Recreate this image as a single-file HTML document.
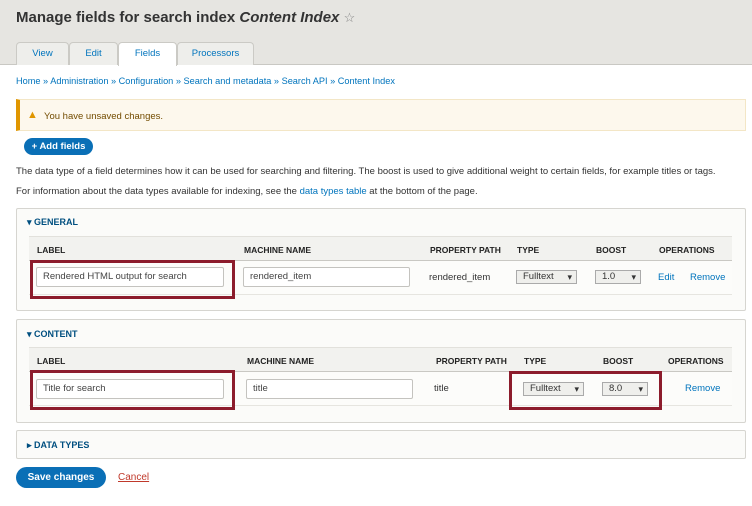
<!DOCTYPE html>
<html><head><meta charset="utf-8"><style>
*{box-sizing:border-box;margin:0;padding:0}
body{width:752px;height:506px;background:#fff;font-family:"Liberation Sans",Arial,sans-serif;color:#333;position:relative;overflow:hidden;font-size:9px}
.a{position:absolute;white-space:nowrap}
a,.lnk{color:#0074bd;text-decoration:none}
.hdr{position:absolute;left:0;top:0;width:752px;height:65px;background:#e6e5e1;border-bottom:1px solid #c9c8c3}
.tab{position:absolute;top:42px;height:23px;background:#eeeeeb;border:1px solid #cbcac5;border-bottom:none;border-radius:4px 4px 0 0;color:#0074bd;font-size:9.5px;text-align:center;line-height:22px}
.fs{position:absolute;left:16px;width:730px;background:#fbfbf9;border:1px solid #d6d5d0;border-radius:2px}
.th{position:absolute;left:12px;width:703px;height:25px;background:#f2f2ef;border-top:1px solid #e2e1dc;border-bottom:1px solid #c9c8c3}
.th span{position:absolute;top:8px;font-size:8.5px;font-weight:bold;color:#222}
.row{position:absolute;left:12px;width:703px;border-bottom:1px solid #e6e5e0;background:#fcfcfa}
.in{position:absolute;height:20px;background:#fff;border:1px solid #c4c3bf;border-radius:2px;font-size:9.5px;padding-left:6px;line-height:18px;color:#444}
.sel{position:absolute;height:14px;background:#efefec;border:1px solid #aaa;font-size:9.5px;line-height:12px;padding-left:6px;color:#333}
.sel:after{content:"▾";position:absolute;right:4px;top:0;font-size:9px}
.red{position:absolute;border:3px solid #8c1c2c}
.leg{position:absolute;left:10px;font-size:9px;font-weight:bold;color:#004f80}
.btn{position:absolute;background:#0a6fb6;color:#fff;font-weight:bold;border-radius:12px;text-align:center}
</style></head><body>
<div class="hdr"></div>
<div class="a" style="left:16px;top:9px;font-size:15px;font-weight:bold;color:#333">Manage fields for search index <i>Content Index</i> <span style="font-weight:normal;font-size:13px;color:#888">☆</span></div>
<div class="tab" style="left:16px;width:53px">View</div>
<div class="tab" style="left:69px;width:49px">Edit</div>
<div class="tab" style="left:118px;width:59px;background:#fff;height:24px">Fields</div>
<div class="tab" style="left:177px;width:77px">Processors</div>
<div class="a lnk" style="left:16px;top:76px;font-size:9.2px">Home » Administration » Configuration » Search and metadata » Search API » Content Index</div>
<div class="a" style="left:16px;top:99px;width:730px;height:32px;background:#fdf8ed;border:1px solid #f3e6c6;border-left:4px solid #e09600"></div>
<div class="a" style="left:27px;top:109px;font-size:11px;color:#e09600">▲</div>
<div class="a" style="left:44px;top:111px;font-size:9.5px;color:#734c00">You have unsaved changes.</div>
<div class="btn" style="left:24px;top:138px;width:69px;height:17px;line-height:17px;font-size:9.5px">+ Add fields</div>
<div class="a" style="left:16px;top:166px;font-size:9.5px">The data type of a field determines how it can be used for searching and filtering. The boost is used to give additional weight to certain fields, for example titles or tags.</div>
<div class="a" style="left:16px;top:186px;font-size:9.5px">For information about the data types available for indexing, see the <span class="lnk">data types table</span> at the bottom of the page.</div>

<div class="fs" style="top:208px;height:103px">
<div class="leg" style="top:8px">▾ GENERAL</div>
<div class="th" style="top:27px"><span style="left:8px">LABEL</span><span style="left:215px">MACHINE NAME</span><span style="left:401px">PROPERTY PATH</span><span style="left:488px">TYPE</span><span style="left:567px">BOOST</span><span style="left:630px">OPERATIONS</span></div>
<div class="row" style="top:52px;height:34px"></div>
</div>
<div class="in" style="left:36px;top:267px;width:188px">Rendered HTML output for search</div>
<div class="in" style="left:243px;top:267px;width:167px">rendered_item</div>
<div class="a" style="left:429px;top:272px;font-size:9.5px">rendered_item</div>
<div class="sel" style="left:516px;top:270px;width:61px">Fulltext</div>
<div class="sel" style="left:595px;top:270px;width:46px">1.0</div>
<div class="a lnk" style="left:658px;top:272px;font-size:9.5px">Edit</div>
<div class="a lnk" style="left:690px;top:272px;font-size:9.5px">Remove</div>
<div class="red" style="left:30px;top:260px;width:205px;height:39px"></div>

<div class="fs" style="top:319px;height:104px">
<div class="leg" style="top:9px">▾ CONTENT</div>
<div class="th" style="top:27px"><span style="left:8px">LABEL</span><span style="left:218px">MACHINE NAME</span><span style="left:407px">PROPERTY PATH</span><span style="left:495px">TYPE</span><span style="left:574px">BOOST</span><span style="left:639px">OPERATIONS</span></div>
<div class="row" style="top:52px;height:34px"></div>
</div>
<div class="in" style="left:36px;top:379px;width:188px">Title for search</div>
<div class="in" style="left:246px;top:379px;width:167px">title</div>
<div class="a" style="left:434px;top:383px;font-size:9.5px">title</div>
<div class="sel" style="left:523px;top:382px;width:61px">Fulltext</div>
<div class="sel" style="left:602px;top:382px;width:46px">8.0</div>
<div class="a lnk" style="left:685px;top:383px;font-size:9.5px">Remove</div>
<div class="red" style="left:30px;top:370px;width:205px;height:40px"></div>
<div class="red" style="left:509px;top:371px;width:153px;height:39px"></div>

<div class="fs" style="top:430px;height:29px">
<div class="leg" style="top:9px">▸ DATA TYPES</div>
</div>
<div class="btn" style="left:16px;top:467px;width:90px;height:21px;line-height:21px;font-size:10px">Save changes</div>
<div class="a" style="left:118px;top:472px;font-size:10px;color:#c0392b;text-decoration:underline">Cancel</div>
</body></html>
